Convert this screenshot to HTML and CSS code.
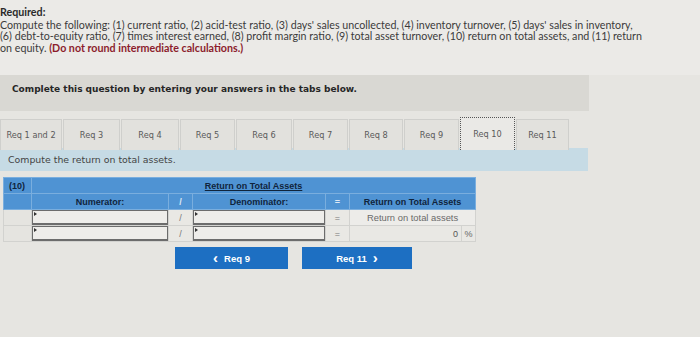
FILE: index.html
```html
<!DOCTYPE html>
<html>
<head>
<meta charset="utf-8">
<link rel="stylesheet" href="styles.css">
</head>
<body>
<div class="intro">
  <div class="req-title">Required:</div>
  <div class="req-line">Compute the following: (1) current ratio, (2) acid-test ratio, (3) days' sales uncollected, (4) inventory turnover, (5) days' sales in inventory,</div>
  <div class="req-line">(6) debt-to-equity ratio, (7) times interest earned, (8) profit margin ratio, (9) total asset turnover, (10) return on total assets, and (11) return</div>
  <div class="req-line">on equity. <span class="warn">(Do not round intermediate calculations.)</span></div>
</div>

<div class="banner">Complete this question by entering your answers in the tabs below.</div>

<div class="tabs">
  <div class="tab">Req 1 and 2</div>
  <div class="tab">Req 3</div>
  <div class="tab">Req 4</div>
  <div class="tab">Req 5</div>
  <div class="tab">Req 6</div>
  <div class="tab">Req 7</div>
  <div class="tab">Req 8</div>
  <div class="tab">Req 9</div>
  <div class="tab active">Req 10</div>
  <div class="tab">Req 11</div>
</div>

<div class="instruct">Compute the return on total assets.</div>

<table class="calc">
  <colgroup>
    <col class="c-num"><col class="c-a"><col class="c-op"><col class="c-b"><col class="c-op"><col class="c-res"><col class="c-pct">
  </colgroup>
  <tr class="h1">
    <th class="lbl">(10)</th>
    <th colspan="6"><span class="ul">Return on Total Assets</span></th>
  </tr>
  <tr class="h2">
    <th class="lbl"></th>
    <th>Numerator:</th>
    <th class="op">/</th>
    <th>Denominator:</th>
    <th class="op">=</th>
    <th colspan="2">Return on Total Assets</th>
  </tr>
  <tr>
    <td class="lbl"></td>
    <td class="in"><div class="box"></div></td>
    <td class="op">/</td>
    <td class="in"><div class="box"></div></td>
    <td class="op">=</td>
    <td class="res" colspan="2">Return on total assets</td>
  </tr>
  <tr>
    <td class="lbl"></td>
    <td class="in"><div class="box"></div></td>
    <td class="op">/</td>
    <td class="in"><div class="box"></div></td>
    <td class="op">=</td>
    <td class="val">0</td>
    <td class="pct">%</td>
  </tr>
</table>

<div class="nav">
  <div class="btn prev"><span class="chev">&lsaquo;</span> Req 9</div>
  <div class="btn next">Req 11 <span class="chev">&rsaquo;</span></div>
</div>
</body>
</html>
```

FILE: styles.css
```css
html, body {
  margin: 0;
  padding: 0;
}
body {
  width: 700px;
  height: 337px;
  overflow: hidden;
  background: #e6e5e1;
  font-family: "DejaVu Sans", Verdana, sans-serif;
}
.intro {
  background: #ebeae7;
  padding: 6px 0 0 0;
  height: 75px;
  box-sizing: border-box;
  font-family: Lato, "Open Sans", sans-serif;
  font-size: 10.7px;
  line-height: 11.6px;
  color: #3b3b3b;
  white-space: nowrap;
}
.req-title {
  font-weight: bold;
  color: #2a2a2a;
  margin-bottom: 1px;
}
.warn {
  color: #8c1c2c;
  font-weight: bold;
}
.banner {
  width: 589px;
  height: 36px;
  box-sizing: border-box;
  background: #d9d8d3;
  padding: 9px 0 0 12px;
  font-weight: bold;
  font-size: 9px;
  color: #262626;
  margin-bottom: 6px;
}
.tabs {
  display: grid;
  grid-template-columns: 62px 57px 58px 55px 56px 55px 54px 55px 55px 53px;
  column-gap: 1px;
  width: 563px;
  height: 31px;
  align-items: end;
}
.tab {
  height: 31px;
  box-sizing: border-box;
  border: 1px solid #cfcfcc;
  border-bottom: none;
  background: #e2e1dd;
  color: #5a5a5a;
  font-size: 8.2px;
  display: flex;
  align-items: center;
  justify-content: center;
}
.tab.active {
  height: 33px;
  background: #eae9e6;
  border: 1px dotted #555;
  border-bottom: none;
}
.instruct {
  width: 588px;
  height: 23px;
  box-sizing: border-box;
  background: #c6dbe5;
  padding: 6px 0 0 8px;
  font-size: 9.4px;
  color: #444;
  margin-bottom: 6px;
}
.calc {
  margin-left: 3px;
  border-collapse: collapse;
  table-layout: fixed;
  width: 472px;
  font-family: "Liberation Sans", Arial, sans-serif;
  font-size: 9px;
}
.c-num { width: 28px; }
.c-a { width: 137px; }
.c-op { width: 24px; }
.c-b { width: 133px; }
.c-res { width: 112px; }
.c-pct { width: 14px; }
.calc th, .calc td {
  padding: 0;
  border: 1px solid #d2d2cf;
}
.calc tr { height: 16px; }
.calc th {
  background: #4f93d3;
  color: #10243c;
  font-weight: bold;
  text-align: center;
  border-color: #7aaede;
}
.calc .h1 th.lbl {
  text-align: left;
  padding-left: 5px;
}
.calc .h2 th.op {
  color: #dfe9f3;
}
.ul {
  text-decoration: underline;
}
.calc td.lbl {
  background: #e5e4e0;
}
.calc td.op {
  background: #e9e8e4;
  color: #777;
  text-align: center;
}
.calc td.in {
  background: #e9e8e4;
}
.box {
  position: relative;
  height: 15px;
  box-sizing: border-box;
  border: 1px solid #6c6c6c;
  border-bottom-width: 2px;
  background: #eeedea;
}
.box::before {
  content: "";
  position: absolute;
  left: 1px;
  top: 1px;
  border-left: 3px solid #333;
  border-top: 2px solid transparent;
  border-bottom: 2px solid transparent;
}
.calc td.res {
  background: #edece9;
  color: #6a6a6a;
  text-align: center;
  font-size: 9.4px;
}
.calc td.val {
  background: #e9e8e4;
  color: #555;
  text-align: right;
  padding-right: 3px;
}
.calc td.pct {
  background: #e9e8e4;
  color: #666;
  text-align: center;
}
.nav {
  display: flex;
  gap: 14px;
  padding-left: 175px;
  margin-top: 5px;
}
.btn {
  height: 22px;
  background: #1d6fc2;
  color: #fff;
  font-family: "Liberation Sans", Arial, sans-serif;
  font-weight: bold;
  font-size: 9.5px;
  display: flex;
  align-items: center;
  justify-content: center;
  gap: 6px;
}
.btn.prev { width: 113px; }
.btn.next { width: 110px; }
.chev {
  font-size: 15px;
  line-height: 10px;
  font-weight: bold;
}
```
